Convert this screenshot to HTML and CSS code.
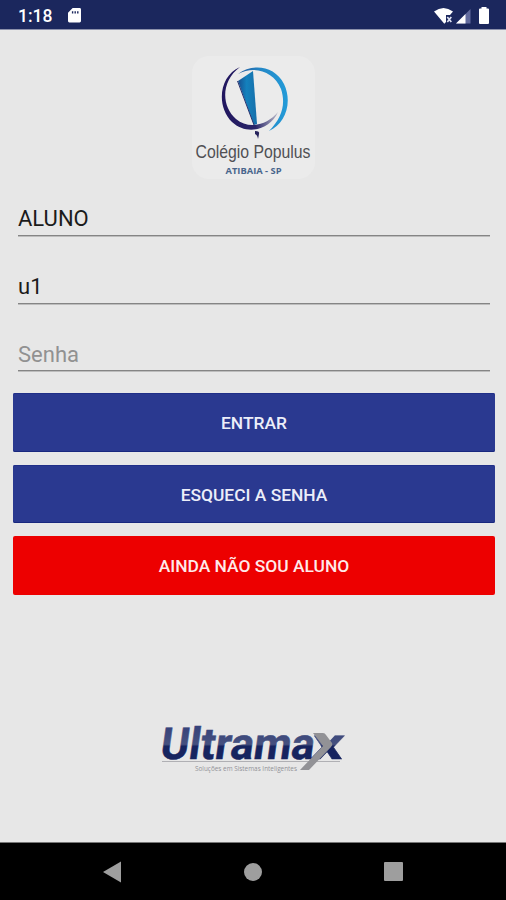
FILE: index.html
```html
<!DOCTYPE html>
<html lang="pt-BR">
<head>
<meta charset="utf-8">
<title>Colégio Populus</title>
<link rel="stylesheet" href="styles.css">
</head>
<body>
<div class="screen">
  <header class="status">
    <span class="time">1:18</span>
    <svg class="sd" width="13" height="15" viewBox="0 0 14 16"><path fill="#fff" fill-rule="evenodd" d="M5 0h7.500Q14 0 14 1.500V14q0 1.500-1.500 1.500h-11Q0 15.500 0 14V5ZM4.200 3.300v2.500h1.500V3.300Zm2.800 0v2.500h1.500V3.300Zm2.800 0v2.500h1.500V3.300Z"/></svg>
    <svg class="signals" width="58" height="20" viewBox="0 0 58 20">
      <path fill="#fff" d="M0 5.500Q9.500-1.500 19 5.500L16 9h-4v7l-1.700 1.700Z"/>
      <path d="m13.300 11 4 5m0-5-4 5" stroke="#dfe2f3" stroke-width="1.700"/>
      <path fill="#626b9e" d="M36.500 3v14.500H22Z"/>
      <path fill="#fff" d="M31.500 8v9.500H22Z"/>
      <path fill="#fff" d="M47.500 2.500v-1.500h5v1.500h1.500q1 0 1 1V17q0 1-1 1h-8q-1 0-1-1V3.500q0-1 1-1Z"/>
    </svg>
  </header>
  <main class="content">
    <svg class="school-logo" width="123" height="123" viewBox="0 0 123 123">
      <defs>
        <linearGradient id="ring" x1="0" x2="1"><stop offset="0" stop-color="#275a9c"/><stop offset=".45" stop-color="#2387c6"/><stop offset="1" stop-color="#239bd8"/></linearGradient>
        <linearGradient id="pen" x1="0" x2="1"><stop offset="0" stop-color="#174f91"/><stop offset=".45" stop-color="#1481bd"/><stop offset="1" stop-color="#176faa"/></linearGradient>
        <linearGradient id="arc" x1="0" x2="1"><stop offset="0" stop-color="#21165f"/><stop offset=".6" stop-color="#292568"/><stop offset="1" stop-color="#b7b7c8"/></linearGradient>
      </defs>
      <rect width="123" height="123" rx="17" fill="#ebebeb"/>
      <path fill="url(#arc)" d="M48 11C27 20 24 50 40 66C55 80 78 74 86 56C75 69 57 74 44 63C29 50 29 25 48 11Z"/>
      <path fill="url(#ring)" d="M46 18C61 7 83 10 92 28C101 47 93 68 77 75C90 62 94 48 89 33C82 16 63 9 46 18Z"/>
      <path fill="url(#pen)" d="M46 25 61 15 65 68 62 69Z"/>
      <path fill="none" stroke="#27306d" stroke-width="1" d="m45.500 25 16.500 44"/>
      <path fill="#26235c" d="M63 75q5 0 4 3-.5 3-1 5-.5-4-3-5Z"/>
      <text class="school-name" x="3.500" y="102" textLength="115" lengthAdjust="spacingAndGlyphs">Colégio Populus</text>
      <text class="school-city" x="33.500" y="118" textLength="56" lengthAdjust="spacingAndGlyphs">ATIBAIA - SP</text>
    </svg>
    <form class="login">
      <input class="field" aria-label="Perfil" value="ALUNO">
      <input class="field" aria-label="Usuário" value="u1">
      <input class="field" aria-label="Senha" placeholder="Senha">
      <div class="actions">
        <button class="button" type="button">ENTRAR</button>
        <button class="button" type="button">ESQUECI A SENHA</button>
        <button class="button danger" type="button">AINDA NÃO SOU ALUNO</button>
      </div>
    </form>
    <svg class="company-logo" width="190" height="54" viewBox="0 0 190 54">
      <defs><linearGradient id="brand" gradientUnits="userSpaceOnUse" x1="0" y1="-33" x2="0" y2="0"><stop offset="0" stop-color="#35417a"/><stop offset=".57" stop-color="#46517f"/><stop offset=".63" stop-color="#17245f"/><stop offset="1" stop-color="#17245f"/></linearGradient></defs>
      <path d="M2 40.500h178" stroke="#b0b0b4"/>
      <g transform="translate(0 37.500) skewX(-8)" fill="url(#brand)">
        <text class="brand-name" x="-1" y="0" textLength="154" lengthAdjust="spacingAndGlyphs">Ultrama</text>
        <text class="brand-name" x="150" y="0" textLength="32" lengthAdjust="spacingAndGlyphs">x</text>
      </g>
      <path fill="#929296" d="M153 12h10q2 0 3 2l6 8q1 2-1 4l-22 23h-9l23-24Z"/>
      <text class="tagline" x="35" y="50" textLength="102" lengthAdjust="spacingAndGlyphs">Soluções em Sistemas Inteligentes</text>
    </svg>
  </main>
  <nav class="navbar">
    <svg width="18" height="22" viewBox="0 0 18 22"><path fill="#9e9e9e" d="M0 11 18 .5v21Z"/></svg>
    <svg width="18" height="18" viewBox="0 0 18 18"><circle cx="9" cy="9" r="9" fill="#9e9e9e"/></svg>
    <svg width="19" height="19" viewBox="0 0 19 19"><rect width="19" height="19" rx="1" fill="#9e9e9e"/></svg>
  </nav>
</div>
</body>
</html>
```
FILE: styles.css
```css
* { box-sizing: border-box; }
body { margin: 0; font-family: Roboto, sans-serif; background: #e7e7e7; }
.screen { height: 900px; display: flex; flex-direction: column; overflow: hidden; }
.status { height: 30px; flex: none; display: flex; align-items: center; padding: 2px 14px 0 18px; background: #1b275d; border-bottom: 1px solid #8c91ab; }
.time { color: #fff; font-size: 17.500px; font-weight: 500; line-height: 20px; width: 50px; }
.signals { margin-left: auto; }
.content { flex: 1; display: flex; flex-direction: column; align-items: center; padding-top: 26px; }
.school-logo { display: block; flex: none; margin-left: 1px; overflow: visible; }
.school-name { font: 18.500px "Liberation Sans", sans-serif; fill: #505054; }
.school-city { font: bold 8.500px "Open Sans", sans-serif; fill: #48658c; }
.login { width: 100%; padding: 17px 11px 0 13px; display: flex; flex-direction: column; }
.field { display: block; height: 40px; margin: 0 5px 28px; padding: 5px 0 0; border: 0; border-bottom: 1px solid #858585; box-shadow: 0 1px #bdbdbd; border-radius: 0; background: transparent; color: #1b1b1b; font: 22px Roboto, sans-serif; outline: 0; }
.field:nth-child(3) { height: 39px; padding-top: 6px; }
.field::placeholder { color: #919191; opacity: 1; }
.actions { display: grid; gap: 13px; margin-top: -5.700px; }
.button { height: 58.500px; border: 0; border-radius: 2px; padding: 1px 0 0; background: #2a3990; color: #eceef9; font: 500 17.400px Roboto, sans-serif; box-shadow: inset 0 -1px #18277e, inset 0 1px #202f88; }
.danger { background: #ed0000; color: #ffeaea; box-shadow: none; }
.company-logo { display: block; flex: none; margin: 126px 0 0 4px; overflow: visible; }
.brand-name { font: bold 44px Roboto, sans-serif; stroke: url(#brand); stroke-width: .5px; }
.tagline { font: 6.500px "Open Sans", sans-serif; fill: #929297; }
.navbar { height: 58px; flex: none; background: #000; border-top: 1px solid #777; display: flex; align-items: center; justify-content: space-between; padding: 0 103px; }
.navbar svg:nth-child(2) { margin-left: 1px; }
```
